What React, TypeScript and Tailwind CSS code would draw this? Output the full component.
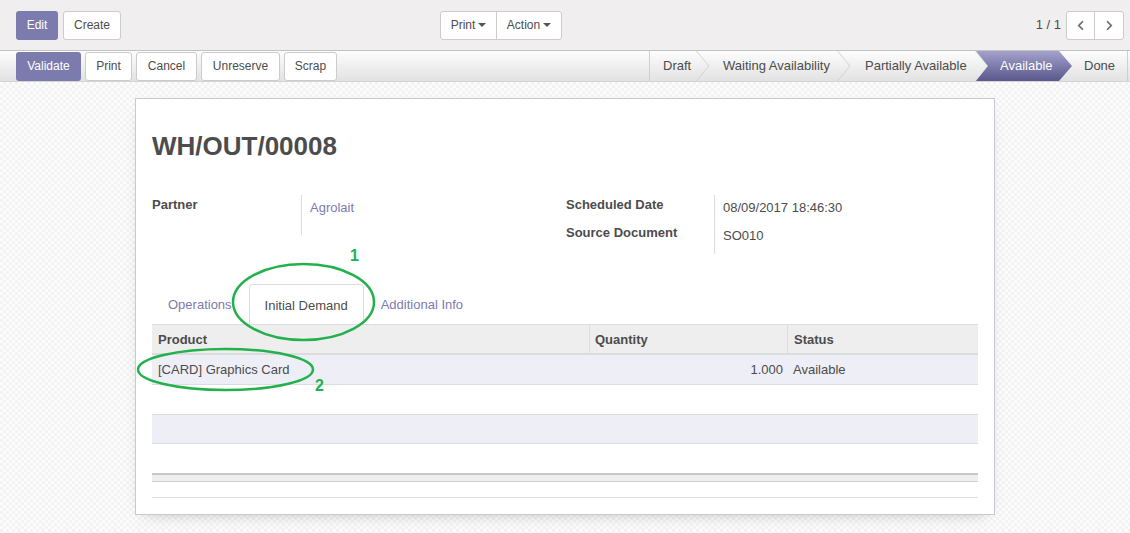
import { FaChevronLeft, FaChevronRight } from "react-icons/fa";

const stages = [
  { label: "Draft", cls: "w-[48px] pl-[13px] border-l border-[#cfcfcf]" },
  { label: "Waiting Availability", cls: "w-[141px] pl-[26px]" },
  { label: "Partially Available", cls: "w-[138px] pl-[27px]" },
];

const Chevron = () => (
  <svg
    className="absolute right-[-13px] top-0 z-10"
    width="14"
    height="30"
    viewBox="0 0 14 30"
  >
    <polyline points="0.5,0 13,15 0.5,30" fill="none" stroke="#d2d2d2" />
  </svg>
);

const rows = [
  { h: "h-[30px] bg-[#eeeef6] border-b", product: "[CARD] Graphics Card", qty: "1.000", status: "Available" },
  { h: "h-[30px] bg-white border-b", product: "", qty: "", status: "" },
  { h: "h-[29px] bg-[#eeeef6] border-b", product: "", qty: "", status: "" },
  { h: "h-[29px] bg-white", product: "", qty: "", status: "" },
];

export default function App() {
  return (
    <div className="relative w-full h-[533px] overflow-hidden bg-white text-[13px] text-[#4c4c4c] font-['Liberation_Sans',Arial,sans-serif]">
      {/* control panel */}
      <div className="flex items-center h-[51px] bg-[#f0eeee] border-b border-[#c2c2c2] pl-4 pr-[6px]">
        <button className="w-[42px] h-[29px] rounded-[3px] bg-[#7c7bad] text-white text-[12px]">
          Edit
        </button>
        <button className="ml-[5px] w-[58px] h-[29px] rounded-[3px] bg-white border border-[#ccc] text-[12px]">
          Create
        </button>
        <div className="ml-[319px] flex h-[29px] rounded-[3px] border border-[#ccc] bg-white text-[12px]">
          <button className="w-[56px] flex items-center justify-center gap-[3px] border-r border-[#ccc]">
            Print
            <span className="inline-block border-x-[4px] border-t-[4px] border-x-transparent border-t-[#555]" />
          </button>
          <button className="w-[64px] flex items-center justify-center gap-[3px]">
            Action
            <span className="inline-block border-x-[4px] border-t-[4px] border-x-transparent border-t-[#555]" />
          </button>
        </div>
        <div className="ml-auto flex items-center">
          <span className="mr-[5px] text-[13px]">1 / 1</span>
          <div className="flex h-[29px] rounded-[3px] border border-[#ccc] bg-white">
            <button className="w-[28px] flex items-center justify-center border-r border-[#ccc] text-[#707070]">
              <FaChevronLeft size={11} />
            </button>
            <button className="w-[28px] flex items-center justify-center text-[#707070]">
              <FaChevronRight size={11} />
            </button>
          </div>
        </div>
      </div>

      {/* status bar */}
      <div className="flex items-center justify-between h-[31px] border-b border-[#d4d4d4] bg-linear-to-b from-[#fdfdfd] to-[#e2e2e2] pl-4 pr-[2px]">
        <div className="flex gap-1 text-[12px]">
          <button className="w-[65px] h-[29px] rounded-[3px] bg-[#7c7bad] text-white">Validate</button>
          <button className="w-[47px] h-[29px] rounded-[3px] bg-white border border-[#ccc]">Print</button>
          <button className="w-[61px] h-[29px] rounded-[3px] bg-white border border-[#ccc]">Cancel</button>
          <button className="w-[79px] h-[29px] rounded-[3px] bg-white border border-[#ccc]">Unreserve</button>
          <button className="w-[53px] h-[29px] rounded-[3px] bg-white border border-[#ccc]">Scrap</button>
        </div>
        <div className="flex h-[30px] leading-[30px]">
          {stages.map((s) => (
            <div key={s.label} className={`relative h-full whitespace-nowrap ${s.cls}`}>
              {s.label}
              <Chevron />
            </div>
          ))}
          <div className="relative z-20 -mr-[13px] w-[96px] h-full pl-[24px] text-white bg-linear-to-b from-[#a4a2cc] to-[#5a588c] [clip-path:polygon(0_0,83px_0,96px_50%,83px_100%,0_100%,12px_50%)]">
            Available
          </div>
          <div className="w-[69px] h-full pl-[25px] border-r border-[#cfcfcf]">Done</div>
        </div>
      </div>

      {/* sheet area */}
      <div className="h-[451px] pt-4 bg-[repeating-conic-gradient(#f3f3f3_0%_25%,#fcfcfc_0%_50%)] bg-[length:6px_6px]">
        <div className="mx-auto w-[860px] border border-[#c9c9d3] bg-white px-4 pt-[33px] pb-[16px] shadow-[0_6px_16px_-10px_rgba(0,0,0,0.35)]">
          <h1 className="text-[26px] leading-[28px] font-bold text-[#4c4c4c]">WH/OUT/00008</h1>

          <div className="mt-[35px] flex">
            <div className="w-[414px] grid grid-cols-[149px_1fr] items-start">
              <div className="pt-px font-bold leading-[18px]">Partner</div>
              <div className="h-[40px] border-l border-[#ddd] pl-2 pt-[4px] leading-[18px] text-[#7c7bad]">
                Agrolait
              </div>
            </div>
            <div className="grid grid-cols-[148px_1fr]">
              <div className="h-[28px] pt-px font-bold leading-[18px]">Scheduled Date</div>
              <div className="h-[28px] border-l border-[#ddd] pl-2 pt-[4px] leading-[18px]">08/09/2017 18:46:30</div>
              <div className="h-[31px] pt-px font-bold leading-[18px]">Source Document</div>
              <div className="h-[31px] border-l border-[#ddd] pl-2 pt-[4px] leading-[18px]">SO010</div>
            </div>
          </div>

          <div className="mt-[30px] flex h-[40px] items-stretch leading-[18px]">
            <div className="mr-[2px] pl-[16px] pr-[15px] pt-[12px] text-[#7c7bad]">Operations</div>
            <div className="mr-[2px] px-[15px] pt-[12px] border border-b-0 border-[#ddd] rounded-t-[4px] bg-white">
              Initial Demand
            </div>
            <div className="px-[15px] pt-[12px] text-[#7c7bad]">Additional Info</div>
          </div>

          <div className="w-[826px]">
            <div className="flex h-[31px] bg-[#eee] border-t border-[#ddd] border-b-2 border-b-[#dcdcdc] font-bold leading-[30px]">
              <div className="w-[438px] pl-[6px] border-r border-[#ddd]">Product</div>
              <div className="w-[198px] pl-[5px] border-r border-[#ddd]">Quantity</div>
              <div className="flex-1 pl-[6px]">Status</div>
            </div>
            {rows.map((r, i) => (
              <div key={i} className={`flex border-[#ddd] leading-[30px] ${r.h}`}>
                <div className="w-[438px] pl-[6px]">{r.product}</div>
                <div className="w-[198px] pr-[5px] text-right">{r.qty}</div>
                <div className="flex-1 pl-[5px]">{r.status}</div>
              </div>
            ))}
            <div className="h-[9px] bg-[#eee] border-t-2 border-[#c8c8c8] border-b border-b-[#cfcfcf]" />
            <div className="mt-[15px] h-px bg-[#ddd]" />
          </div>
        </div>
      </div>

      {/* annotations */}
      <svg
        className="absolute inset-0 pointer-events-none"
        width="1130"
        height="533"
        viewBox="0 0 1130 533"
      >
        <ellipse cx="303.5" cy="302" rx="70.5" ry="38" fill="none" stroke="#22b14c" strokeWidth="2.5" />
        <ellipse cx="225.5" cy="369.5" rx="87.5" ry="20.5" fill="none" stroke="#22b14c" strokeWidth="2.5" />
        <text x="354.5" y="261" textAnchor="middle" fontSize="16" fontWeight="bold" fill="#22b14c" fontFamily="Liberation Sans, Arial, sans-serif">
          1
        </text>
        <text x="319.5" y="391" textAnchor="middle" fontSize="16" fontWeight="bold" fill="#22b14c" fontFamily="Liberation Sans, Arial, sans-serif">
          2
        </text>
      </svg>
    </div>
  );
}
